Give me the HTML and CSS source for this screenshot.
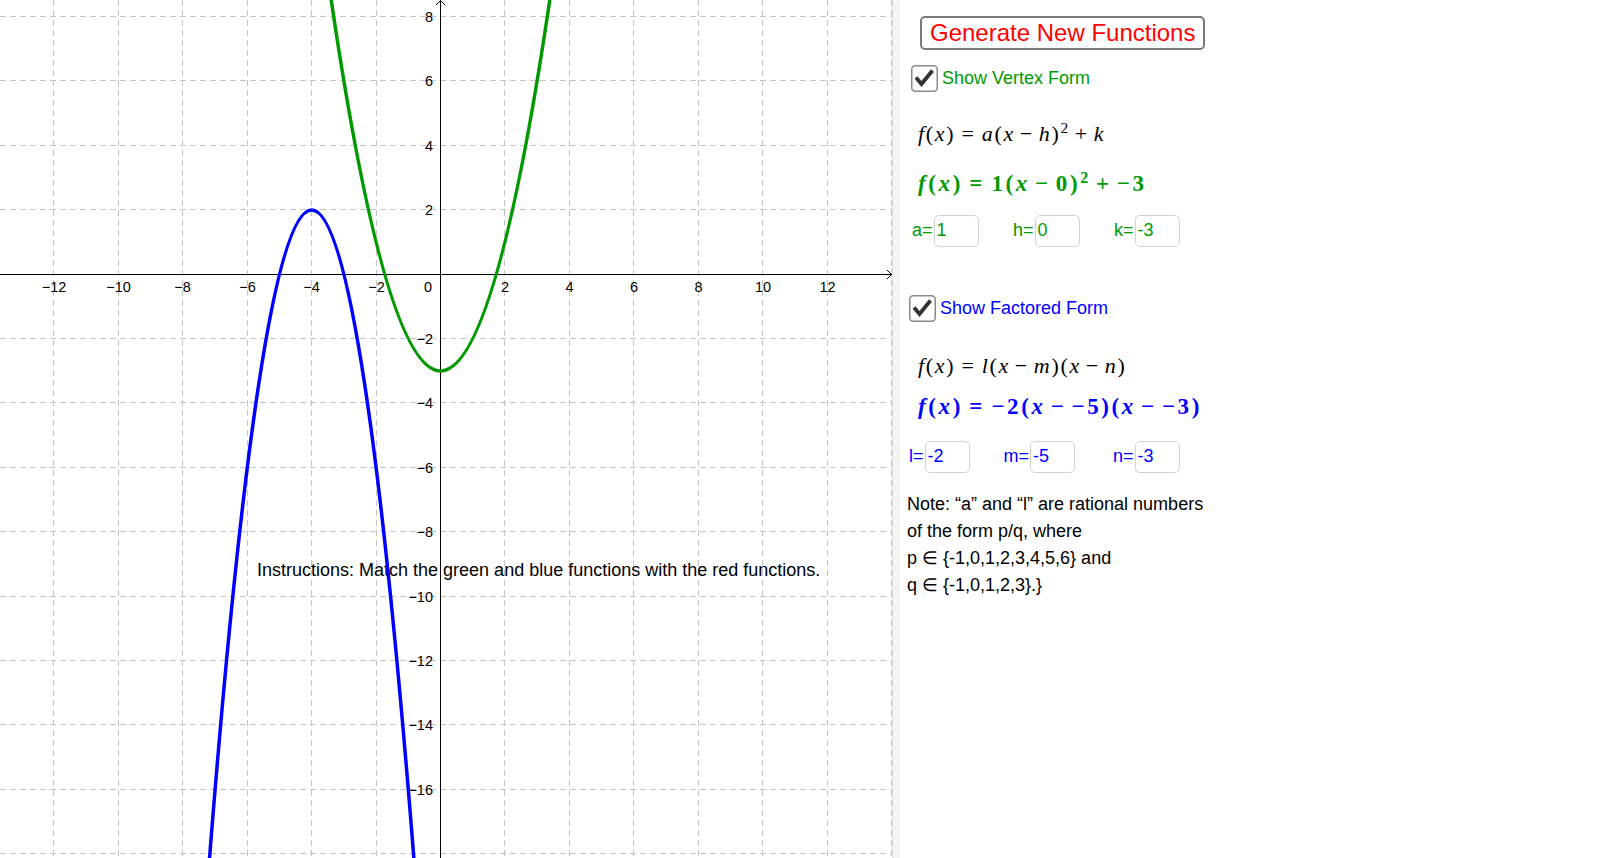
FILE: index.html
```html
<!DOCTYPE html>
<html lang="en">
<head>
<meta charset="utf-8">
<title>Vertex and Factored Form</title>
<link rel="stylesheet" href="styles.css">
</head>
<body>
<div class="app">
  <div class="graph">
    <svg class="plot" width="892" height="858" viewBox="0 0 892 858">
      <g class="grid">
        <path d="M53.5 0V858M118.5 0V858M182.5 0V858M247.5 0V858M311.5 0V858M376.5 0V858M504.5 0V858M569.5 0V858M633.5 0V858M698.5 0V858M762.5 0V858M827.5 0V858M891.5 0V858"/>
        <path d="M0 16.5H892M0 80.5H892M0 145.5H892M0 209.5H892M0 338.5H892M0 402.5H892M0 467.5H892M0 531.5H892M0 596.5H892M0 660.5H892M0 724.5H892M0 789.5H892M0 853.5H892"/>
      </g>
      <g class="axes">
        <path d="M0 274.5H891.5M440.5 0.5V858"/>
        <path d="M887 270L891.5 274.5L887 279M436 5L440.5 0.5L445 5"/>
      </g>
      <g class="xlabels">
        <text x="54" y="292">−12</text>
        <text x="118.5" y="292">−10</text>
        <text x="182.5" y="292">−8</text>
        <text x="247.5" y="292">−6</text>
        <text x="311.5" y="292">−4</text>
        <text x="376.5" y="292">−2</text>
        <text x="428" y="292">0</text>
        <text x="505" y="292">2</text>
        <text x="569.5" y="292">4</text>
        <text x="634" y="292">6</text>
        <text x="698.5" y="292">8</text>
        <text x="763" y="292">10</text>
        <text x="827.5" y="292">12</text>
      </g>
      <g class="ylabels">
        <text x="433" y="21.5">8</text>
        <text x="433" y="85.5">6</text>
        <text x="433" y="150.5">4</text>
        <text x="433" y="214.5">2</text>
        <text x="433" y="343.5">−2</text>
        <text x="433" y="407.5">−4</text>
        <text x="433" y="472.5">−6</text>
        <text x="433" y="536.5">−8</text>
        <text x="433" y="601.5">−10</text>
        <text x="433" y="665.5">−12</text>
        <text x="433" y="729.5">−14</text>
        <text x="433" y="794.5">−16</text>
      </g>
      <text class="instr" x="257" y="576">Instructions: Match the green and blue functions with the red functions.</text>
      <path class="curve green-curve" d="M327.8 -23.55Q440.5 765.35 553.2 -23.55"/>
      <path class="curve blue-curve" d="M205.44 911.2Q311.7 -491.4 417.96 911.2"/>
    </svg>
  </div>
  <div class="divider"></div>
  <div class="panel">
    <div class="gen">Generate New Functions</div>

    <div class="cbrow cb1 green">
      <svg class="cb" width="27" height="27" viewBox="0 0 27 27"><rect x="0.75" y="0.75" width="25.5" height="25.5" rx="3.5"/><path d="M5 12.5L10.5 19L21.5 5.5"/></svg>
      <span class="cblabel">Show Vertex Form</span>
    </div>

    <div class="math f1"><span class="mi">f</span>(<span class="mi">x</span>)<span class="rel">=</span><span class="mi">a</span>(<span class="mi">x</span><span class="bin">−</span><span class="mi">h</span>)<sup>2</sup><span class="bin">+</span><span class="mi">k</span></div>

    <div class="math bold green f2"><span class="mi">f</span>(<span class="mi">x</span>)<span class="rel">=</span>1(<span class="mi">x</span><span class="bin">−</span>0)<sup>2</sup><span class="bin">+</span>−3</div>

    <div class="inrow green r1">
      <div class="fld"><span>a=</span><span class="inp">1</span></div>
      <div class="fld"><span>h=</span><span class="inp">0</span></div>
      <div class="fld"><span>k=</span><span class="inp">-3</span></div>
    </div>

    <div class="cbrow cb2 blue">
      <svg class="cb" width="27" height="27" viewBox="0 0 27 27"><rect x="0.75" y="0.75" width="25.5" height="25.5" rx="3.5"/><path d="M5 12.5L10.5 19L21.5 5.5"/></svg>
      <span class="cblabel">Show Factored Form</span>
    </div>

    <div class="math f3"><span class="mi">f</span>(<span class="mi">x</span>)<span class="rel">=</span><span class="mi">l</span>(<span class="mi">x</span><span class="bin">−</span><span class="mi">m</span>)(<span class="mi">x</span><span class="bin">−</span><span class="mi">n</span>)</div>

    <div class="math bold blue f4"><span class="mi">f</span>(<span class="mi">x</span>)<span class="rel">=</span>−2(<span class="mi">x</span><span class="bin">−</span>−5)(<span class="mi">x</span><span class="bin">−</span>−3)</div>

    <div class="inrow blue r2">
      <div class="fld"><span>l=</span><span class="inp">-2</span></div>
      <div class="fld"><span>m=</span><span class="inp">-5</span></div>
      <div class="fld fld-far"><span>n=</span><span class="inp">-3</span></div>
    </div>

    <div class="note">
      Note: “a” and “l” are rational numbers<br>
      of the form p/q, where<br>
      p ∈ {-1,0,1,2,3,4,5,6} and<br>
      q ∈ {-1,0,1,2,3}.}
    </div>
  </div>
</div>
</body>
</html>
```

FILE: styles.css
```css
html, body {
  margin: 0;
  padding: 0;
  background: #ffffff;
}

body {
  width: 1600px;
  height: 858px;
  overflow: hidden;
  font-family: "Liberation Sans", Arial, sans-serif;
}

.app {
  display: flex;
  width: 1600px;
  height: 858px;
}

.graph {
  width: 892px;
  height: 858px;
  flex: none;
  overflow: hidden;
  background: #ffffff;
}

.plot {
  display: block;
}

.grid path {
  fill: none;
  stroke: #c4c4c4;
  stroke-width: 1;
  stroke-dasharray: 6 4;
}

.axes path {
  fill: none;
  stroke: #000000;
  stroke-width: 1;
}

.xlabels text,
.ylabels text {
  font-family: "Liberation Sans", Arial, sans-serif;
  font-size: 14.5px;
  fill: #000000;
}

.xlabels text {
  text-anchor: middle;
}

.ylabels text {
  text-anchor: end;
}

.instr {
  font-family: "Liberation Sans", Arial, sans-serif;
  font-size: 18px;
  fill: #000000;
}

.curve {
  fill: none;
  stroke-width: 3.5;
  stroke-linecap: round;
}

.green-curve {
  stroke: #009900;
}

.blue-curve {
  stroke: #0000ff;
}

.divider {
  width: 7px;
  flex: none;
  background: #f3f3f3;
  border-left: 1px solid #dedede;
}

.panel {
  flex: 1;
  display: flex;
  flex-direction: column;
  align-items: flex-start;
}

.green {
  color: #009900;
}

.blue {
  color: #0000ff;
}

.gen {
  margin: 16px 0 0 20px;
  height: 34px;
  box-sizing: border-box;
  border: 2px solid #7a7a7a;
  border-radius: 5px;
  padding: 0 8px 0 8px;
  display: flex;
  align-items: center;
  font-size: 24px;
  color: #ff0000;
  background: #ffffff;
  white-space: nowrap;
}

.cbrow {
  display: flex;
  align-items: center;
  gap: 4px;
  height: 27px;
  font-size: 18px;
  white-space: nowrap;
}

.cb1 {
  margin: 15px 0 0 11px;
}

.cb2 {
  margin: 48.5px 0 0 9px;
}

.cb {
  display: block;
  flex: none;
}

.cb rect {
  fill: #ffffff;
  stroke: #8a8a8a;
  stroke-width: 1.5;
}

.cb path {
  fill: none;
  stroke: #333333;
  stroke-width: 3.8;
}

.math {
  font-family: "Liberation Serif", "Times New Roman", serif;
  font-size: 22px;
  line-height: 1;
  height: 22px;
  white-space: nowrap;
  color: #000000;
  letter-spacing: 1.7px;
  margin-left: 18px;
}

.math.bold {
  font-weight: bold;
  font-size: 23px;
  height: 23px;
  letter-spacing: 2.6px;
}

.math.green {
  color: #009900;
}

.math.blue {
  color: #0000ff;
}

.mi {
  font-style: italic;
}

.rel {
  margin: 0 0.2778em;
}

.bin {
  margin: 0 0.2222em;
}

.math sup {
  font-size: 0.7em;
  line-height: 0;
  vertical-align: 0.5em;
}

.f1 {
  margin-top: 31.3px;
}

.f2 {
  margin-top: 27px;
}

.f3 {
  margin-top: 33px;
}

.f4 {
  margin-top: 18px;
}

.inrow {
  display: flex;
  gap: 34.5px;
  font-size: 18px;
  height: 32px;
}

.r1 {
  margin: 19.7px 0 0 12px;
}

.r2 {
  margin: 22.4px 0 0 9px;
  gap: 34px;
}

.fld {
  display: flex;
  align-items: center;
  gap: 1px;
}

.fld-far {
  margin-left: 4px;
}

.inp {
  width: 45px;
  height: 32px;
  box-sizing: border-box;
  border: 1px solid #d2d2d2;
  border-radius: 5px;
  padding-left: 2px;
  display: flex;
  align-items: center;
  background: #ffffff;
}

.note {
  margin: 18px 0 0 7px;
  font-size: 18px;
  line-height: 27px;
  color: #000000;
  white-space: nowrap;
}
```
